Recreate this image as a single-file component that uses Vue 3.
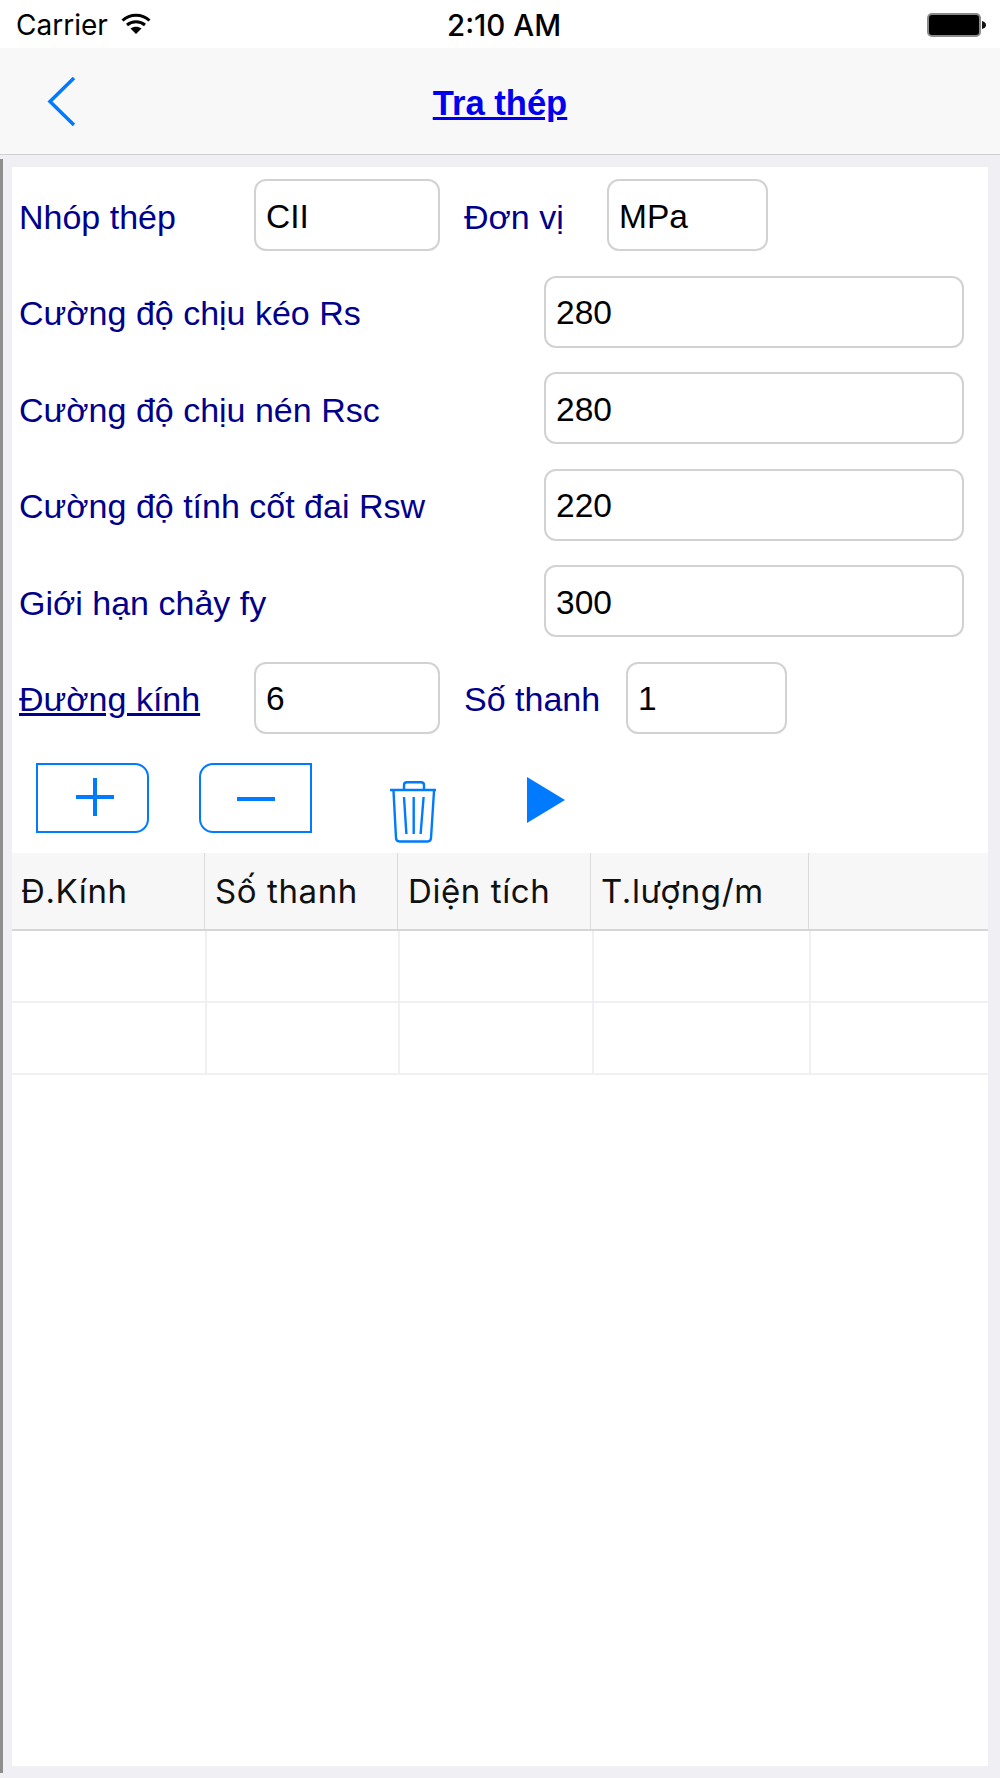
<template>
  <div class="screen">
    <div class="status-bar">
      <div class="status-left">
        <span>Carrier</span>
        <svg class="wifi" width="30" height="21" viewBox="0 0 30 21">
          <path d="M1.500 7.500 C9 0.500 21 0.500 28.500 7.500" fill="none" stroke="#000" stroke-width="3" />
          <path d="M6 12 C11 7.800 19 7.800 24 12" fill="none" stroke="#000" stroke-width="3" />
          <path d="M9.500 15.500 L15 21 L20.500 15.500 C17 13 13 13 9.500 15.500 Z" fill="#000" />
        </svg>
      </div>
      <span class="clock">2:10 AM</span>
      <svg class="battery" width="60" height="24" viewBox="0 0 60 24">
        <rect x="1" y="1" width="52" height="22" rx="4" fill="#000" stroke="#8a8a8a" stroke-width="2" />
        <path d="M55 8 C58 9 59 10 59 12 C59 14 58 15 55 16 Z" fill="#111" />
      </svg>
    </div>

    <div class="nav-bar">
      <svg class="back" width="30" height="50" viewBox="0 0 30 50">
        <path d="M27 1 L3 24.500 L27 48" fill="none" stroke="#007aff" stroke-width="3.500" />
      </svg>
      <a class="nav-title">Tra thép</a>
    </div>

    <div class="body-row">
      <div class="edge"></div>
      <div class="panel">
        <div class="form-row">
          <span class="label w-short">Nhóp thép</span>
          <div class="box w-mid">CII</div>
          <span class="label w-unit">Đơn vị</span>
          <div class="box w-small">MPa</div>
        </div>

        <div class="form-row" v-for="row in strengths" :key="row.label">
          <span class="label w-long">{{ row.label }}</span>
          <div class="box w-wide">{{ row.value }}</div>
        </div>

        <div class="form-row">
          <a class="label w-short link">Đường kính</a>
          <div class="box w-mid">6</div>
          <span class="label w-count">Số thanh</span>
          <div class="box w-small">1</div>
        </div>

        <div class="actions">
          <button class="btn btn-add">
            <svg width="38" height="38" viewBox="0 0 38 38">
              <path d="M19 0 V38 M0 19 H38" stroke="#007aff" stroke-width="4" />
            </svg>
          </button>
          <button class="btn btn-minus">
            <svg width="38" height="4" viewBox="0 0 38 4">
              <path d="M0 2 H38" stroke="#007aff" stroke-width="4" />
            </svg>
          </button>
          <svg class="trash" width="46" height="62" viewBox="0 0 46 62">
            <path d="M0 9 H46" stroke="#007aff" stroke-width="2.400" />
            <path d="M14 8 V4 Q14 1.200 17 1.200 H31 Q34 1.200 34 4 V8" fill="none" stroke="#007aff" stroke-width="2.400" />
            <path d="M3.500 10 L6 57 Q6.200 60.500 9.500 60.500 H37.500 Q40.800 60.500 41 57 L44 10" fill="none" stroke="#007aff" stroke-width="2.400" />
            <path d="M14 16 L16.400 53 M23.700 16 V53 M33.600 16 L30.600 53" fill="none" stroke="#007aff" stroke-width="2.400" />
          </svg>
          <svg class="play" width="38" height="46" viewBox="0 0 38 46">
            <path d="M0 0 L38 23 L0 46 Z" fill="#007aff" />
          </svg>
        </div>

        <div class="grid-table">
          <div class="grid-head">
            <div class="head-cell" v-for="col in columns" :key="col">{{ col }}</div>
          </div>
          <div class="grid-line" v-for="n in 2" :key="n">
            <div class="line-cell" v-for="c in columns.length" :key="c"></div>
          </div>
        </div>
      </div>
    </div>
  </div>
</template>

<script setup>
const strengths = [
  { label: 'Cường độ chịu kéo Rs', value: '280' },
  { label: 'Cường độ chịu nén Rsc', value: '280' },
  { label: 'Cường độ tính cốt đai Rsw', value: '220' },
  { label: 'Giới hạn chảy fy', value: '300' }
]

const columns = ['Đ.Kính', 'Số thanh', 'Diện tích', 'T.lượng/m', '']
</script>

<style>
html, body {
  margin: 0;
  background: #efeff4;
}
</style>

<style scoped>
.screen {
  width: 1000px;
  height: 1778px;
  display: flex;
  flex-direction: column;
  background: #efeff4;
  font-family: "Liberation Sans", Arial, sans-serif;
  overflow: hidden;
}

/* status bar */
.status-bar {
  height: 48px;
  box-sizing: border-box;
  flex-shrink: 0;
  background: #fff;
  display: flex;
  align-items: center;
  justify-content: space-between;
  padding: 2px 13px 0 16px;
  position: relative;
  font-family: Inter, "Liberation Sans", sans-serif;
  font-size: 28px;
  color: #000;
}

.status-left {
  display: flex;
  align-items: center;
  gap: 13px;
}

.wifi {
  margin-top: -3px;
}

.clock {
  position: absolute;
  left: 447px;
  font-size: 29.5px;
  font-weight: 500;
}

.battery {
  margin-top: -1px;
}

/* nav */
.nav-bar {
  height: 106px;
  flex-shrink: 0;
  background: #f8f8f8;
  border-bottom: 1px solid #cfcfd2;
  display: flex;
  align-items: center;
  justify-content: center;
  position: relative;
}

.back {
  position: absolute;
  left: 47px;
  top: 29px;
}

.nav-title {
  margin-top: 4px;
  font-size: 34.6px;
  font-weight: 700;
  color: #0000ee;
  text-decoration: underline;
}

/* body */
.body-row {
  flex: 1;
  display: flex;
  min-height: 0;
}

.edge {
  width: 3px;
  margin: 4px 0 5px;
  background: #8e8e8e;
}

.panel {
  flex: 1;
  margin: 12px 12px 12px 9px;
  background: #fff;
  display: flex;
  flex-direction: column;
  padding-top: 12px;
}

.form-row {
  height: 72px;
  margin-bottom: 24.6px;
  display: flex;
  align-items: center;
  padding-left: 7px;
}

.label {
  padding-top: 4px;
  font-size: 34px;
  color: #00008b;
  flex-shrink: 0;
}

.link {
  text-decoration: underline;
}

.w-short { width: 235px; }
.w-long  { width: 525px; }
.w-unit  { width: 143px; margin-left: 24px; }
.w-count { width: 162px; margin-left: 24px; }

.box {
  height: 72px;
  box-sizing: border-box;
  border: 2px solid #d2d2d2;
  border-radius: 12px;
  background: #fff;
  display: flex;
  align-items: center;
  padding: 3px 0 0 10px;
  font-size: 33.5px;
  color: #000;
  flex-shrink: 0;
}

.w-mid   { width: 186px; }
.w-small { width: 161px; }
.w-wide  { width: 420px; }

/* buttons */
.actions {
  height: 90px;
  margin-top: 4.4px;
  display: flex;
  align-items: flex-start;
}

.btn {
  width: 113px;
  height: 70px;
  box-sizing: border-box;
  background: #fff;
  border: 2px solid #007aff;
  padding: 0;
  display: flex;
  align-items: center;
  justify-content: center;
}

.btn-add {
  margin-left: 24px;
  padding: 0 0 2px 4px;
  border-radius: 0 14px 14px 0;
}

.btn-minus {
  margin-left: 50px;
  padding-top: 2px;
  border-radius: 14px 0 0 14px;
}

.trash {
  margin-left: 78px;
  margin-top: 18px;
}

.play {
  margin-left: 91px;
  margin-top: 14px;
}

/* table */
.grid-table {
  display: flex;
  flex-direction: column;
}

.grid-head {
  height: 76px;
  display: grid;
  grid-template-columns: 193px 193px 193px 218px 179px;
  background: #f7f7f7;
  border-bottom: 2px solid #d6d6d6;
}

.head-cell {
  font-family: Inter, "Liberation Sans", sans-serif;
  font-size: 33px;
  letter-spacing: 0.6px;
  color: #111;
  display: flex;
  align-items: center;
  padding-left: 9px;
  border-right: 1px solid #dcdcdc;
}

.head-cell + .head-cell {
  padding-left: 10px;
}

.grid-line {
  height: 70px;
  display: grid;
  grid-template-columns: 195px 193px 194px 217px 177px;
  border-bottom: 2px solid #efeff4;
}

.line-cell {
  border-right: 2px solid #efeff4;
}

.line-cell:last-child,
.head-cell:last-child {
  border-right: none;
}
</style>
